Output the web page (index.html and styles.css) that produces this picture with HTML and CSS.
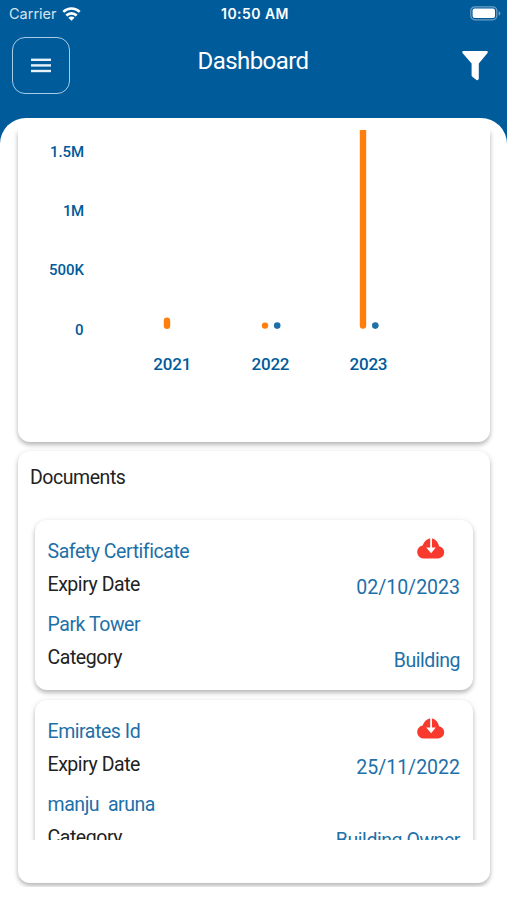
FILE: index.html
```html
<!DOCTYPE html>
<html lang="en">
<head>
    <meta charset="UTF-8">
    <meta name="viewport" content="width=device-width, initial-scale=1.0">
    <title>Dashboard</title>
    <link rel="stylesheet" href="styles.css">
</head>
<body>
    <header class="header">
        <div class="status-bar">
            <div class="carrier">
                <span>Carrier</span>
                <svg width="19" height="14" viewBox="0 0 18 14" fill="none" stroke="#fff" stroke-width="2.6">
                    <path d="M0.8 4.9C5.5 0.4 12.5 0.4 17.2 4.9"/>
                    <path d="M3.8 8.5C6.8 5.6 11.2 5.6 14.2 8.5"/>
                    <path d="M9 13.8L5.9 10.8C7.7 9.2 10.3 9.2 12.1 10.8Z" fill="#fff" stroke="none"/>
                </svg>
            </div>
            <span class="time">10:50 AM</span>
            <svg class="battery" width="31" height="15" viewBox="0 0 31 15">
                <rect x="0.8" y="0.8" width="26" height="13" rx="4" fill="none" stroke="#6f9fc4" stroke-width="1.2"/>
                <rect x="2.6" y="2.6" width="22.4" height="9.4" rx="2" fill="#fff"/>
                <path d="M28.6 5V9.8Q30.4 9 30.4 7.4T28.6 5Z" fill="#6f9fc4"/>
            </svg>
        </div>
        <div class="nav-bar">
            <button class="menu-button" aria-label="Menu">
                <svg width="20" height="15" viewBox="0 0 20 15" fill="#e6f1f9">
                    <rect width="20" height="2.4" y="0.6"/>
                    <rect width="20" height="2.4" y="6.2"/>
                    <rect width="20" height="2.4" y="11.8"/>
                </svg>
            </button>
            <h1>Dashboard</h1>
            <button class="filter-button" aria-label="Filter">
                <svg width="28" height="31" viewBox="0 0 28 31">
                    <path d="M2 1H26Q27.5 1.3 26.5 3L17.8 13.6V28.5Q17.4 30.7 15.5 30L11.3 26.8Q10.6 26.2 10.6 25V13.6L1.5 3Q0.5 1.3 2 1Z" fill="#fff"/>
                </svg>
            </button>
        </div>
    </header>

    <main class="sheet">
        <div class="scroll-area">
            <section class="card chart-card">
                <svg class="chart" width="472" height="270" viewBox="0 0 472 270">
                    <g class="axis-y">
                        <text x="66" y="27" textLength="34">1.5M</text>
                        <text x="66" y="86" textLength="21">1M</text>
                        <text x="66" y="145" textLength="35">500K</text>
                        <text x="65.5" y="205" textLength="9">0</text>
                    </g>
                    <g class="bar-amount">
                        <rect x="145.8" y="187.6" width="6.4" height="11.4" rx="3.2"/>
                        <circle cx="247" cy="195.6" r="3.2"/>
                        <rect x="341.8" y="-10" width="6.4" height="208.8" rx="3.2"/>
                    </g>
                    <g class="bar-paid">
                        <circle cx="259.2" cy="195.6" r="3.3"/>
                        <circle cx="357.3" cy="195.6" r="3.3"/>
                    </g>
                    <g class="axis-x">
                        <text x="154.3" y="240.3" textLength="38">2021</text>
                        <text x="252.5" y="240.3" textLength="38">2022</text>
                        <text x="350.5" y="240.3" textLength="38">2023</text>
                    </g>
                </svg>
            </section>

            <section class="card documents-card">
                <h2>Documents</h2>
                <div class="document-list">
                    <article class="document">
                        <div class="document-row">
                            <span class="name">Safety Certificate</span>
                            <svg class="download" width="28" height="21" viewBox="0 0 28 21">
                                <path d="M7 20.5A6.5 6.5 0 0 1 5.6 7.6C7.4 3 10.4 0.6 14 0.6S20.8 3.2 22 8.2A6.2 6.2 0 0 1 21.5 20.5Z" fill="#f8392d"/>
                                <path d="M13.2 0H15V9.6H18.8L14.1 15.2L9.2 9.6H13.2Z" fill="#fff"/>
                            </svg>
                        </div>
                        <div class="document-row">
                            <span class="label">Expiry Date</span>
                            <span class="value date">02/10/2023</span>
                        </div>
                        <div class="document-row owner">
                            <span class="name">Park Tower</span>
                        </div>
                        <div class="document-row">
                            <span class="label">Category</span>
                            <span class="value">Building</span>
                        </div>
                    </article>
                    <article class="document">
                        <div class="document-row">
                            <span class="name">Emirates Id</span>
                            <svg class="download" width="28" height="21" viewBox="0 0 28 21">
                                <path d="M7 20.5A6.5 6.5 0 0 1 5.6 7.6C7.4 3 10.4 0.6 14 0.6S20.8 3.2 22 8.2A6.2 6.2 0 0 1 21.5 20.5Z" fill="#f8392d"/>
                                <path d="M13.2 0H15V9.6H18.8L14.1 15.2L9.2 9.6H13.2Z" fill="#fff"/>
                            </svg>
                        </div>
                        <div class="document-row">
                            <span class="label">Expiry Date</span>
                            <span class="value date">25/11/2022</span>
                        </div>
                        <div class="document-row owner">
                            <span class="name">manju  aruna</span>
                        </div>
                        <div class="document-row">
                            <span class="label">Category</span>
                            <span class="value">Building Owner</span>
                        </div>
                    </article>
                </div>
            </section>
        </div>
    </main>
</body>
</html>
```

FILE: styles.css
```css
:root {
    --primary-color: #005b9a;
    --link-color: #1e70a8;
    --accent-color: #ff7f0e;
    --text-color: #222;
    --card-shadow: 0 3px 4px rgba(0, 0, 0, 0.22), 0 1px 6px rgba(0, 0, 0, 0.1);
}

* {
    box-sizing: border-box;
    margin: 0;
    padding: 0;
}

body {
    font-family: Roboto, 'Open Sans', sans-serif;
    font-size: 19.5px;
    letter-spacing: -0.45px;
    color: var(--text-color);
    background: #fff;
    height: 900px;
    overflow: hidden;
}

.header {
    background: var(--primary-color);
    color: #fff;
    height: 145px;
}

.status-bar {
    display: grid;
    grid-template-columns: 1fr auto 1fr;
    align-items: center;
    height: 27px;
    padding: 0 6px 0 9px;
    font-family: Inter, sans-serif;
    font-size: 14.5px;
    letter-spacing: 0;
}

.carrier {
    display: flex;
    align-items: center;
    gap: 5px;
    color: #d5e5f1;
}

.time {
    font-size: 14px;
    font-weight: 600;
    letter-spacing: 0.45px;
}

.battery {
    justify-self: end;
}

.nav-bar {
    display: flex;
    justify-content: space-between;
    align-items: flex-start;
    padding: 10px 18px 0 12px;
}

.nav-bar button {
    display: flex;
    align-items: center;
    justify-content: center;
    background: none;
    border: none;
}

.nav-bar .menu-button {
    width: 58px;
    height: 57px;
    border: 1.5px solid #a9cbe4;
    border-radius: 13px;
}

.nav-bar .filter-button {
    margin: 13px 0 0 25px;
}

h1 {
    font-size: 24px;
    font-weight: 400;
    line-height: 48px;
    letter-spacing: -0.55px;
}

.sheet {
    height: 782px;
    margin-top: -27px;
    padding-top: 12px;
    background: #fff;
    border-radius: 26px 26px 0 0;
}

.scroll-area {
    height: 757px;
    padding: 0 17px 0 18px;
    overflow: hidden;
}

.card {
    background: #fff;
    border-radius: 12px;
    box-shadow: var(--card-shadow);
}

.chart-card {
    height: 312px;
    border-radius: 0 0 12px 12px;
}

.chart {
    display: block;
    font-weight: 500;
    letter-spacing: 0;
}

.axis-y {
    font-size: 15px;
    fill: var(--primary-color);
    text-anchor: end;
}

.axis-x {
    font-size: 17px;
    fill: var(--primary-color);
    text-anchor: middle;
}

.bar-amount {
    fill: var(--accent-color);
}

.bar-paid {
    fill: var(--link-color);
}

.documents-card {
    height: 432px;
    margin-top: 9px;
    padding: 11px 12px 0;
}

h2 {
    font-size: 19.5px;
    font-weight: 400;
    line-height: 32px;
}

.document-list {
    display: flex;
    flex-direction: column;
    gap: 10px;
    height: 346px;
    margin: 0 -12px;
    padding: 26px 17px 0;
    overflow: hidden;
}

.document {
    flex: none;
    height: 170px;
    padding: 15px 13px 0 12.5px;
    border-radius: 12px;
    background: #fff;
    box-shadow: var(--card-shadow);
}

.document-row {
    display: flex;
    justify-content: space-between;
    height: 33px;
    line-height: 33px;
    white-space: pre;
}

.document-row.owner {
    margin-top: 7px;
}

.name,
.value {
    color: var(--link-color);
}

.value {
    padding-top: 3px;
}

.date {
    letter-spacing: 0;
}

.download {
    margin: 3px 15px 0 0;
}
```
